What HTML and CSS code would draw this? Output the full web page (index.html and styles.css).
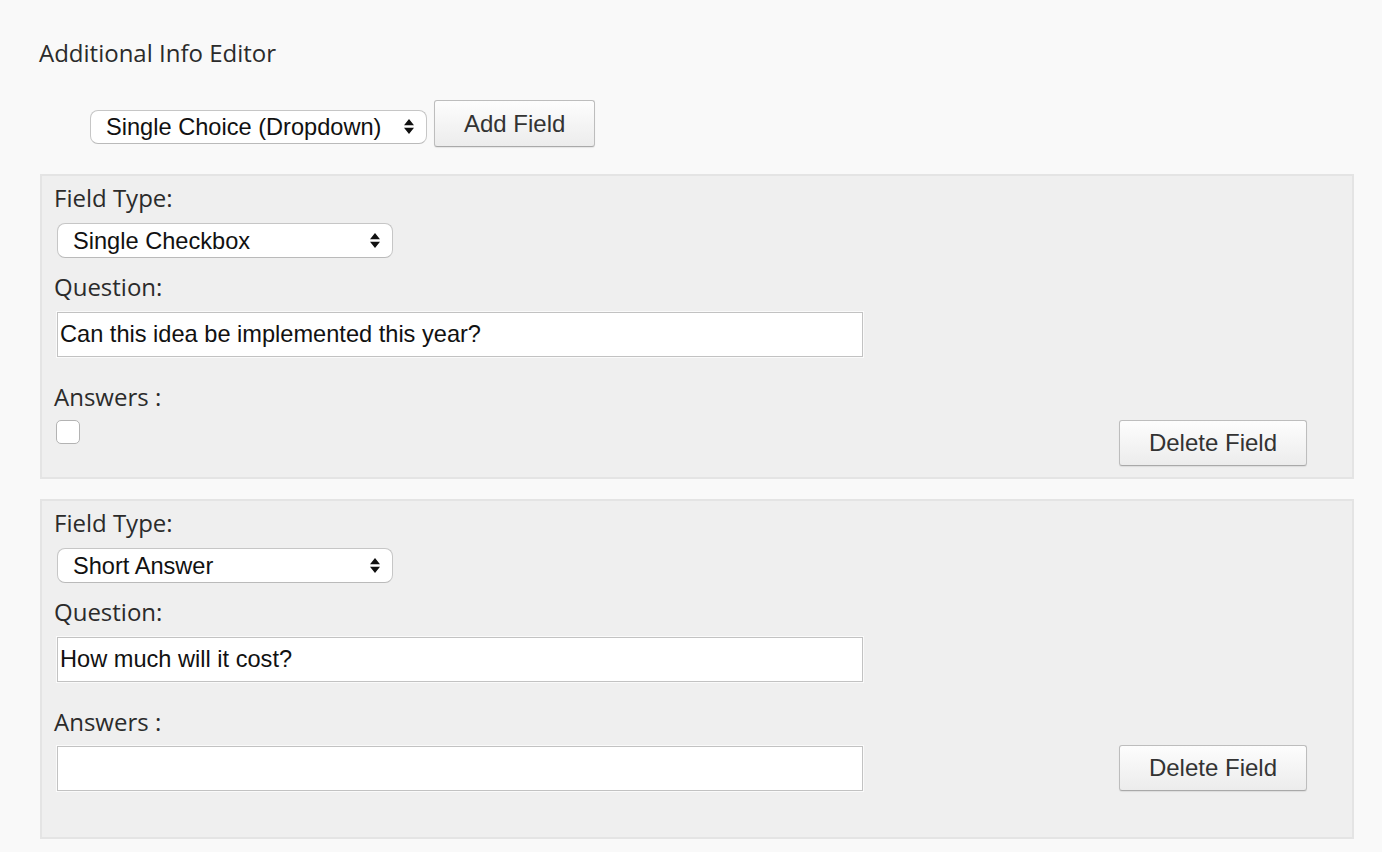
FILE: index.html
```html
<!DOCTYPE html>
<html lang="en">
<head>
    <meta charset="UTF-8">
    <title>Additional Info Editor</title>
    <link rel="stylesheet" href="styles.css">
</head>
<body>
    <div class="editor">
        <h2 class="editor-title">Additional Info Editor</h2>

        <div class="add-row">
            <div class="select-wrap wide">
                <select>
                    <option>Single Choice (Dropdown)</option>
                </select>
                <svg class="arrows" width="10" height="15" viewBox="0 0 10 15"><path d="M5 0 L10 6.3 L0 6.3 Z M0 8.7 L10 8.7 L5 15 Z" fill="#111"/></svg>
            </div>
            <button class="btn">Add Field</button>
        </div>

        <div class="field-panel">
            <label class="field-label">Field Type:</label>
            <div class="select-wrap">
                <select>
                    <option>Single Checkbox</option>
                </select>
                <svg class="arrows" width="10" height="15" viewBox="0 0 10 15"><path d="M5 0 L10 6.3 L0 6.3 Z M0 8.7 L10 8.7 L5 15 Z" fill="#111"/></svg>
            </div>
            <label class="field-label spaced">Question:</label>
            <input class="text-input" type="text" value="Can this idea be implemented this year?">
            <label class="field-label answers">Answers :</label>
            <div class="answer-row">
                <div class="answer-box">
                    <span class="checkbox"></span>
                </div>
                <button class="btn">Delete Field</button>
            </div>
        </div>

        <div class="field-panel">
            <label class="field-label">Field Type:</label>
            <div class="select-wrap">
                <select>
                    <option>Short Answer</option>
                </select>
                <svg class="arrows" width="10" height="15" viewBox="0 0 10 15"><path d="M5 0 L10 6.3 L0 6.3 Z M0 8.7 L10 8.7 L5 15 Z" fill="#111"/></svg>
            </div>
            <label class="field-label spaced">Question:</label>
            <input class="text-input" type="text" value="How much will it cost?">
            <label class="field-label answers">Answers :</label>
            <div class="answer-row">
                <div class="answer-box">
                    <input class="text-input answer-input" type="text" value="">
                </div>
                <button class="btn">Delete Field</button>
            </div>
        </div>
    </div>
</body>
</html>
```

FILE: styles.css
```css
body {
    margin: 0;
    background: #f9f9f9;
    font-family: "Open Sans", "Noto Sans", sans-serif;
    color: #2b2b2b;
}

.editor {
    padding: 37px 28px 0 40px;
}

.editor-title {
    margin: 0 0 0 -1px;
    font-size: 24px;
    font-weight: normal;
    line-height: 32px;
    color: #2b2b2b;
}

.add-row {
    display: flex;
    align-items: flex-start;
    margin: 31px 0 27px 50px;
}

.select-wrap {
    position: relative;
    display: inline-block;
    width: 336px;
}

.select-wrap.wide {
    width: 337px;
    margin-top: 10px;
    margin-right: 7px;
}

.select-wrap select {
    appearance: none;
    -webkit-appearance: none;
    display: block;
    width: 100%;
    height: 35px;
    padding: 0 0 0 15px;
    border: 1px solid #c6c6c6;
    border-bottom-color: #bababa;
    border-radius: 8px;
    background: #fff;
    font-family: "Liberation Sans", Arial, sans-serif;
    font-size: 23.6px;
    color: #111;
}

.select-wrap.wide select {
    height: 34px;
}

.arrows {
    position: absolute;
    right: 13px;
    top: 10px;
}

.select-wrap.wide .arrows {
    top: 9px;
}

.btn {
    height: 46px;
    padding: 0 29px;
    border: 1px solid #bdbdbd;
    border-bottom-color: #a9a9a9;
    border-radius: 3px;
    background: linear-gradient(to bottom, #fdfdfd, #ececec);
    font-family: "Liberation Sans", Arial, sans-serif;
    font-size: 24px;
    color: #333;
    box-shadow: 0 1px 1px rgba(0, 0, 0, 0.08);
}

.add-row .btn {
    height: 47px;
}

.field-panel {
    display: flex;
    flex-direction: column;
    align-items: flex-start;
    margin-bottom: 20px;
    padding: 6px 45px 11px 15px;
    border: 2px solid #e4e4e4;
    background: #efefef;
}

.field-label {
    display: block;
    margin: 0 0 9px -3px;
    font-size: 24px;
    line-height: 32px;
    color: #2b2b2b;
}

.field-label.spaced {
    margin-top: 13px;
}

.field-label.answers {
    margin-top: 24px;
    margin-bottom: 7px;
}

.text-input {
    box-sizing: border-box;
    width: 806px;
    height: 45px;
    padding: 0 2px;
    border: 1px solid #c2c2c2;
    background: #fff;
    box-shadow: 0 0 0 1px #fafafa;
    font-family: "Liberation Sans", Arial, sans-serif;
    font-size: 23.6px;
    color: #111;
    outline: none;
}

.answer-row {
    display: flex;
    justify-content: space-between;
    align-items: flex-start;
    align-self: stretch;
}

.answer-input {
    display: block;
    margin: 1px 0 35px;
}

.checkbox {
    display: block;
    width: 22px;
    height: 22px;
    margin-left: -1px;
    border: 1px solid #b3b3b3;
    border-radius: 5px;
    background: #fff;
}
```
